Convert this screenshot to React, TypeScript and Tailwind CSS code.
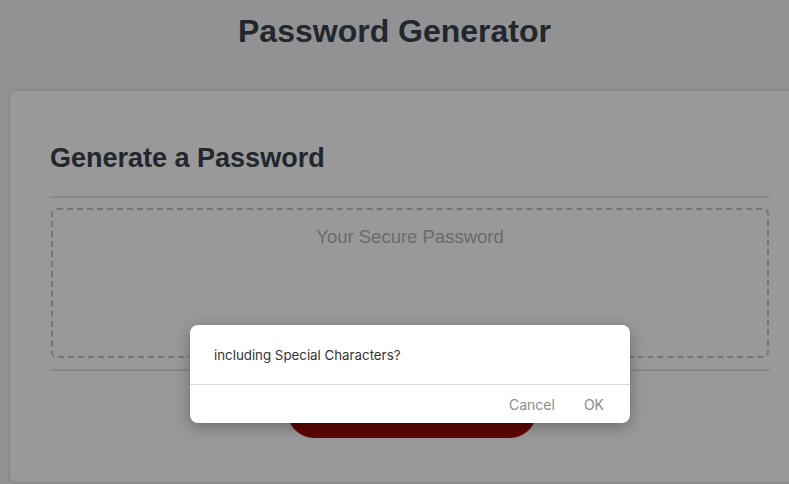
import React from 'react';

export default function App() {
  return (
    <div className="relative h-[484px] w-full overflow-hidden bg-[#f2f3f6] text-[#39424d] [font-family:'Liberation_Sans',Arial,sans-serif]">
      <header className="pt-[12px] text-center">
        <h1 className="text-[32px] font-bold leading-[38px]">Password Generator</h1>
      </header>

      <main className="ml-[10px] mt-[41px] w-[800px] h-[391px] rounded-[6px] bg-white px-[40px] pt-[51px] shadow-[0_0_5px_rgba(0,0,0,0.12)]">
        <h2 className="text-[27px] font-bold leading-[32px]">Generate a Password</h2>

        <div className="mt-[22px] border-t-2 border-[#e4e4e4] pt-[10px]">
          <div className="mx-px h-[150px] rounded-[6px] border-2 border-dashed border-[#c2c4c9] pt-[16px] text-center">
            <p className="text-[18.5px] leading-[22px] text-[#b3b3b3]">Your Secure Password</p>
          </div>
        </div>

        <div className="mt-[11px] border-t-2 border-[#e4e4e4] pt-[12px] flex justify-center">
          <button className="ml-[4px] h-[55px] w-[250px] rounded-[28px] bg-[#9d0909] text-[20px] font-bold text-white">
            Generate Password
          </button>
        </div>
      </main>

      {/* alert overlay */}
      <div className="absolute inset-0 bg-black/40" />
      <div className="absolute left-[190px] top-[325px] w-[440px] rounded-[8px] bg-white shadow-[0_4px_16px_rgba(0,0,0,0.3)] [font-family:Inter,'Noto_Sans',sans-serif]">
        <p className="px-[24px] pt-[20px] pb-[19px] text-[13.3px] leading-[20px] text-[#333333]">
          including Special Characters?
        </p>
        <div className="flex h-[39px] items-center justify-end gap-[29px] border-t border-[#d9d9d9] pr-[26px] text-[14px] text-[#8c8c8c]">
          <span>Cancel</span>
          <span>OK</span>
        </div>
      </div>
    </div>
  );
}
